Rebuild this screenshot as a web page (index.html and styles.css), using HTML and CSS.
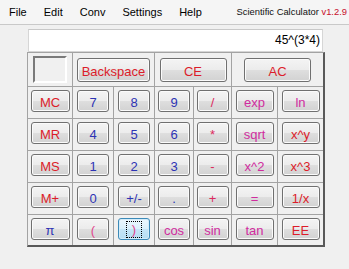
FILE: index.html
```html
<!DOCTYPE html>
<html>
<head>
<meta charset="utf-8">
<link rel="stylesheet" href="styles.css">
</head>
<body>
<div class="menubar">
  <span class="menu">File</span>
  <span class="menu">Edit</span>
  <span class="menu">Conv</span>
  <span class="menu">Settings</span>
  <span class="menu">Help</span>
  <span class="title">Scientific Calculator <span class="ver">v1.2.9</span></span>
</div>
<div class="main">
  <div class="display">45^(3*4)</div>
  <div class="keypad">
    <div class="cell top"><div class="membox"></div></div>
    <div class="cell top span2"><button class="btn wide red">Backspace</button></div>
    <div class="cell top span2"><button class="btn ce red">CE</button></div>
    <div class="cell top span2"><button class="btn ce red">AC</button></div>

    <div class="cell"><button class="btn mem red">MC</button></div>
    <div class="cell"><button class="btn num blue">7</button></div>
    <div class="cell"><button class="btn num blue">8</button></div>
    <div class="cell"><button class="btn num blue">9</button></div>
    <div class="cell"><button class="btn num op">/</button></div>
    <div class="cell"><button class="btn fn mag">exp</button></div>
    <div class="cell"><button class="btn fn mag">ln</button></div>

    <div class="cell"><button class="btn mem red">MR</button></div>
    <div class="cell"><button class="btn num blue">4</button></div>
    <div class="cell"><button class="btn num blue">5</button></div>
    <div class="cell"><button class="btn num blue">6</button></div>
    <div class="cell"><button class="btn num op">*</button></div>
    <div class="cell"><button class="btn fn mag">sqrt</button></div>
    <div class="cell"><button class="btn fn red">x^y</button></div>

    <div class="cell"><button class="btn mem red">MS</button></div>
    <div class="cell"><button class="btn num blue">1</button></div>
    <div class="cell"><button class="btn num blue">2</button></div>
    <div class="cell"><button class="btn num blue">3</button></div>
    <div class="cell"><button class="btn num op">-</button></div>
    <div class="cell"><button class="btn fn mag">x^2</button></div>
    <div class="cell"><button class="btn fn red">x^3</button></div>

    <div class="cell"><button class="btn mem red">M+</button></div>
    <div class="cell"><button class="btn num blue">0</button></div>
    <div class="cell"><button class="btn num blue">+/-</button></div>
    <div class="cell"><button class="btn num blue">.</button></div>
    <div class="cell"><button class="btn num op">+</button></div>
    <div class="cell"><button class="btn fn mag">=</button></div>
    <div class="cell"><button class="btn fn red">1/x</button></div>

    <div class="cell"><button class="btn mem blue">π</button></div>
    <div class="cell"><button class="btn num pink">(</button></div>
    <div class="cell"><button class="btn num pink focus"><span class="focusring">)</span></button></div>
    <div class="cell"><button class="btn num mag">cos</button></div>
    <div class="cell"><button class="btn num mag">sin</button></div>
    <div class="cell"><button class="btn fn mag">tan</button></div>
    <div class="cell"><button class="btn fn red">EE</button></div>
  </div>
</div>
</body>
</html>
```
FILE: styles.css
```css
html, body {
  margin: 0;
  padding: 0;
  background: #f0f0f0;
  font-family: "Liberation Sans", Arial, sans-serif;
  width: 349px;
  height: 269px;
  overflow: hidden;
}

.menubar {
  height: 24px;
  background: #f5f5f5;
  border-bottom: 1px solid #c9c9c9;
  display: flex;
  align-items: flex-start;
  padding-left: 1px;
  font-size: 11px;
  color: #000;
}

.menu {
  padding: 0 8px;
  line-height: 24px;
  margin-right: 1px;
}

.title {
  margin-left: auto;
  margin-right: 2px;
  font-size: 9.4px;
  line-height: 24px;
  color: #111;
}

.ver {
  color: #c8102e;
}

.main {
  padding-left: 27px;
  padding-top: 4px;
}

.display {
  margin-left: 1px;
  width: 291px;
  height: 21px;
  background: #fff;
  border: 1px solid #d6d6d6;
  border-top-color: #c8c8c8;
  font-size: 12px;
  line-height: 21px;
  text-align: right;
  padding-right: 2px;
}

.keypad {
  display: grid;
  grid-template-columns: 44px 40px 40px 38px 37px 45px 45px;
  grid-template-rows: 33px 31px 31px 31px 31px 30px;
  gap: 1px;
  background: #a3a3a3;
  border: 1px solid #a3a3a3;
  border-right: 2px solid #595959;
  border-bottom: 2px solid #595959;
  box-sizing: border-box;
  width: 298px;
}

.cell {
  background: #f0f0f0;
  display: flex;
  justify-content: center;
  align-items: flex-start;
  padding-top: 3px;
  box-sizing: border-box;
}

.cell.top {
  align-items: center;
  padding-top: 0;
}

.span2 {
  grid-column: span 2;
}

.membox {
  width: 30px;
  height: 23px;
  border: 2px solid;
  border-color: #7a7a7a #ffffff #ffffff #7a7a7a;
  background: #f0f0f0;
}

.btn {
  font-family: "Liberation Sans", Arial, sans-serif;
  font-size: 13px;
  height: 22px;
  padding: 4px 0 0;
  margin: 0;
  border: 1px solid #707070;
  border-radius: 3px;
  background: linear-gradient(#f4f4f4 0%, #ececec 48%, #dedede 52%, #d2d2d2 100%);
  box-shadow: inset 0 0 0 1px #fbfbfb;
  line-height: 16px;
  box-sizing: border-box;
}

.btn.wide { width: 73px; height: 24px; }
.btn.ce { width: 67px; height: 24px; }
.btn.mem { width: 39px; }
.btn.num { width: 32px; }
.btn.fn { width: 38px; }

.red { color: #dc1c2a; }
.blue { color: #2d33b4; }
.mag { color: #d02c9e; }
.op { color: #dc2a5e; }
.pink { color: #e0458c; }

.btn.focus {
  border-color: #3c8ab8;
  background: linear-gradient(#ecf7fd 0%, #dbf0fb 48%, #c4e5f7 52%, #b6ddf2 100%);
  box-shadow: inset 0 0 0 1px #d3ecfa;
  padding: 2px 0 0;
  display: flex;
  justify-content: center;
}

.focusring {
  display: block;
  width: 14px;
  height: 15px;
  border: 1px dotted #000;
  line-height: 16px;
}
```
